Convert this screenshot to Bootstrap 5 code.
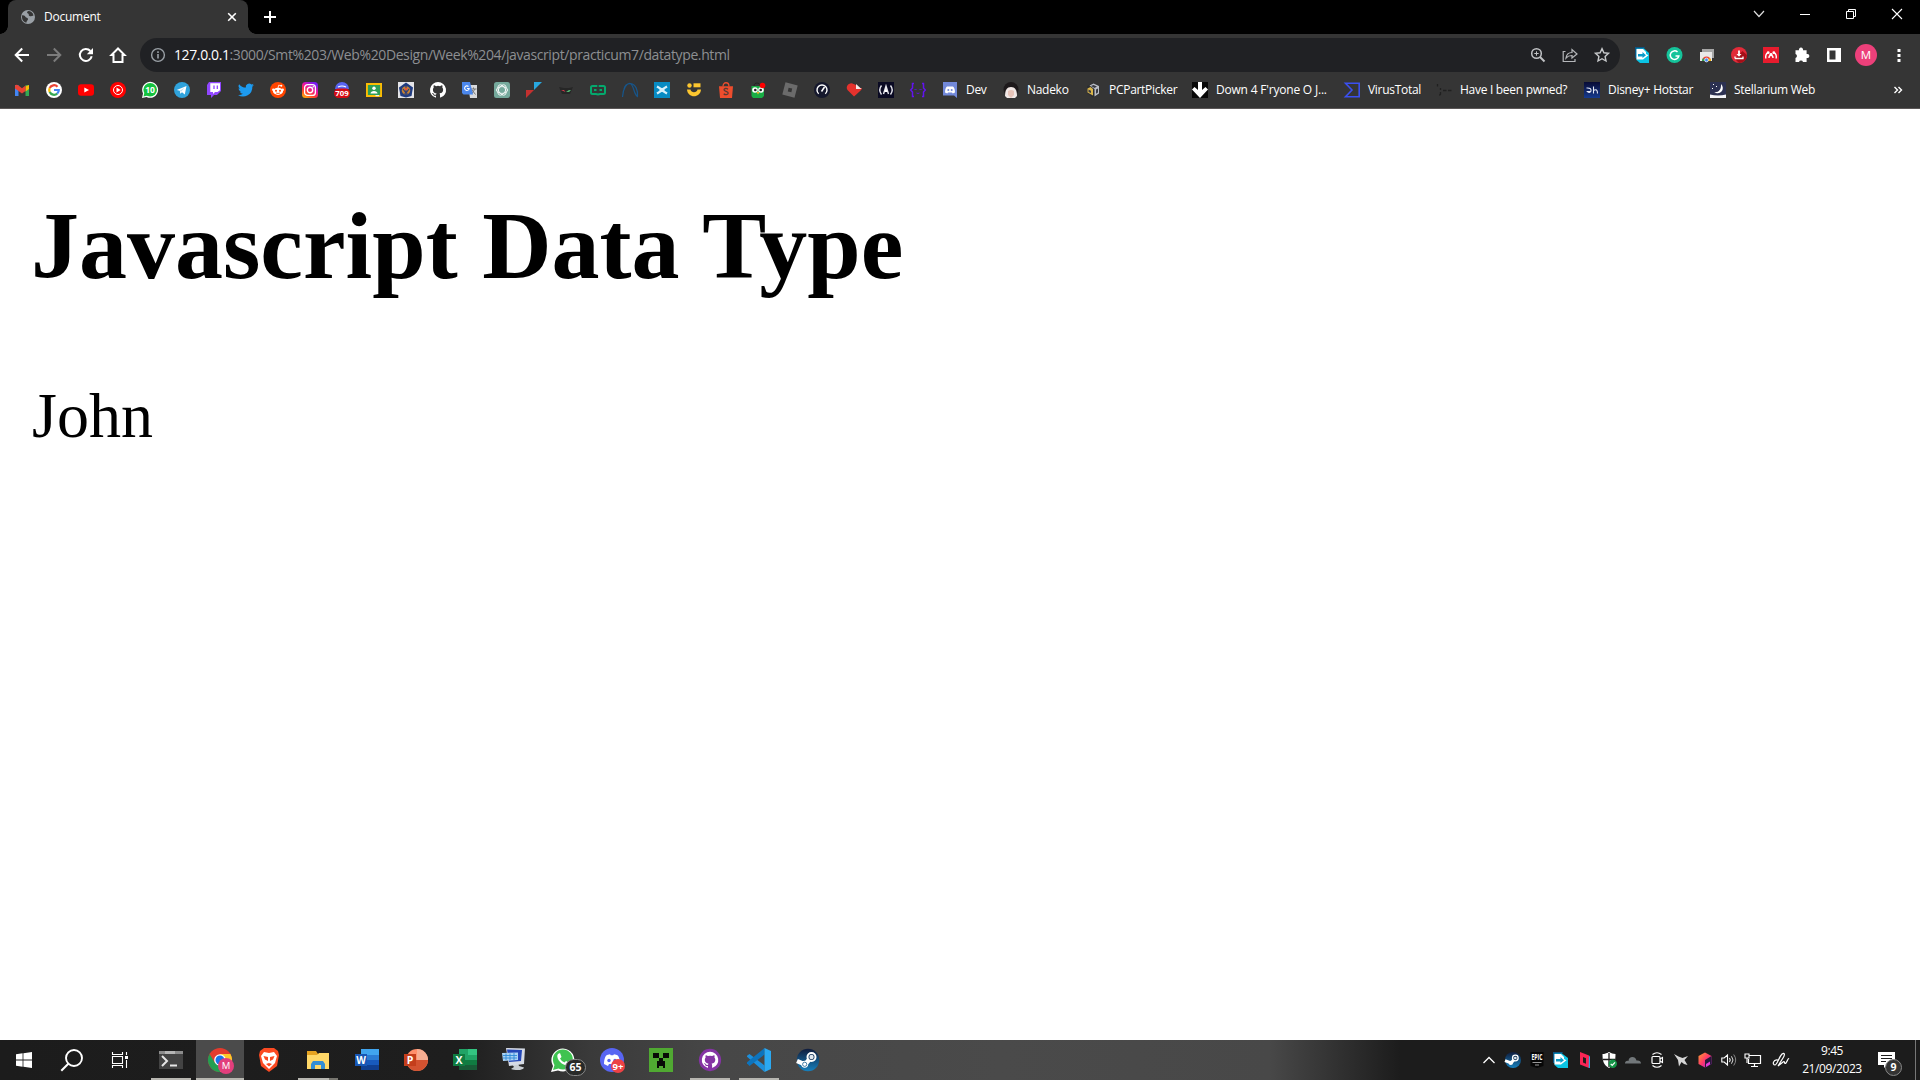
<!DOCTYPE html>
<html lang="en">
<head>
<meta charset="utf-8">
<meta name="viewport" content="width=device-width, initial-scale=1">
<title>Document</title>
<link rel="stylesheet" href="https://cdn.jsdelivr.net/npm/bootstrap@5.3.0/dist/css/bootstrap.min.css">
<style>
  html, body { height: 100%; }
  body { font-family: "Open Sans", "Noto Sans", sans-serif; font-size: 12px; letter-spacing: -.29px; line-height: 16px; color: #fff; background: #fff; }
  svg { display: block; flex: none; overflow: visible; }
  svg text { font-family: "Open Sans", sans-serif; font-weight: 700; text-anchor: middle; letter-spacing: 0; }
  .i16 { width: 16px; height: 16px; }
  .i24 { width: 24px; height: 24px; }
  .tabstrip { height: 34px; background: #000; padding-left: 8px; }
  .tab-active { width: 240px; height: 34px; background: #353535; border-radius: 8px 8px 0 0; padding: 1px 9px 1px 12px; }
  .tab-active::before, .tab-active::after { content: ""; position: absolute; bottom: 0; width: 8px; height: 8px; }
  .tab-active::before { left: -8px; background: radial-gradient(circle at 0 0, transparent 7.5px, #353535 8px); }
  .tab-active::after { right: -8px; background: radial-gradient(circle at 100% 0, transparent 7.5px, #353535 8px); }
  .tab-title { margin-left: 8px; letter-spacing: -.25px; }
  .newtab { margin: 9px 0 0 14px; }
  .winbtn { width: 46px; height: 28px; }
  .toolbar { height: 38px; background: #353535; padding: 4px 13px 0 14px; }
  .navset { gap: 16px; width: 126px; }
  .omnibox { width: 1480px; height: 34px; border-radius: 17px; background: #202124; padding: 0 10px; }
  .url { font-size: 14px; letter-spacing: -.39px; line-height: 20px; margin-left: 8px; color: #8d8f92; white-space: nowrap; }
  .url b { color: #fff; font-weight: 400; }
  .exts { gap: 16px; margin-left: 15px; }
  .exts svg:nth-last-child(-n+4) { margin-left: -1px; margin-right: 1px; }
  .bookmarks { height: 37px; background: #353535; border-bottom: 1px solid #5b5757; padding: 0 17px 0 14px; gap: 16px; }
  .bookmarks span { margin-left: 8px; white-space: nowrap; }
  .w-dev { width: 45px; } .w-nad { width: 66px; } .w-pcp { width: 91px; } .w-down { width: 136px; }
  .w-vt { width: 76px; } .w-pwn { width: 132px; } .w-dis { width: 110px; } .w-ste { width: 105px; }
  .w-down span { letter-spacing: -.2px; }
  .pagebody { font-family: "Liberation Serif", serif; color: #000; font-size: 64px; letter-spacing: 0; line-height: 73px; padding: 0 32px; }
  .pagebody h2 { font-size: 96px; font-weight: 700; line-height: 110px; margin: 82px 0 78px -1px; word-spacing: .6px; }
  .pagebody p { margin: 0; }
  .taskbar { height: 40px; background: linear-gradient(90deg, #1c1c1c 0, #1e1e1e 460px, #3a3a3a 590px, #474747 720px, #4a4a4a 1000px, #484848 1270px, #1c1c1c 1400px); }
  .sysbtn { width: 48px; height: 40px; }
  .appset { margin-left: 3px; }
  .appbtn { width: 49px; height: 40px; padding-right: 1px; }
  .running::after { content: ""; position: absolute; left: 4px; right: 5px; bottom: 0; height: 2px; background: #b7b6b0; }
  .current { background: #4b4b4b; width: 48px; margin-right: 1px; padding-right: 0; }
  .current::after { left: 0; right: 0; }
  .stacked::after { background: linear-gradient(90deg, #b7b6b0 31px, #77766f 31px); }
  .tray { gap: 8px; padding-right: 1px; }
  .clock { width: 84px; line-height: 18px; text-align: center; padding-top: 2px; letter-spacing: -.4px; }
  .notif { width: 41px; padding-left: 4px; }
  .peek { width: 5px; height: 40px; border-left: 1px solid #777; }
</style>
<script src="https://cdn.jsdelivr.net/npm/bootstrap@5.3.0/dist/js/bootstrap.bundle.min.js"></script>
</head>
<body class="d-flex flex-column overflow-hidden">

<header>
  <div class="tabstrip d-flex">
    <div class="tab-active position-relative d-flex align-items-center">
      <svg class="i16" viewBox="0 0 16 16"><circle cx="8" cy="8" r="7" fill="#9aa0a6"/><path d="M2 6.500c2-.5 3 .5 3.500 1.500s2.500.5 2.500 2-1.500 1.500-1.500 3.500C4 13.500 2 11 2 8zM8 2c-1 1-1.500 2 0 2.500s0 2 1.500 2.500 2.500 0 4-.5C13 3.500 11 2 8 2z" fill="#353535"/></svg>
      <span class="tab-title">Document</span>
      <svg class="ms-auto" width="14" height="14" viewBox="0 0 14 14"><path d="M3.200 3.200l7.600 7.600M10.800 3.200l-7.600 7.600" stroke="#fff" stroke-width="1.600"/></svg>
    </div>
    <svg class="i16 newtab" viewBox="0 0 16 16"><path d="M8 2v12M2 8h12" stroke="#fff" stroke-width="2"/></svg>
    <div class="d-flex ms-auto">
      <div class="winbtn d-flex align-items-center justify-content-center"><svg width="12" height="8" viewBox="0 0 12 8"><path d="M1 1l5 5.500L11 1" fill="none" stroke="#ddd" stroke-width="1.200"/></svg></div>
      <div class="winbtn d-flex align-items-center justify-content-center"><svg width="10" height="10" viewBox="0 0 10 10"><path d="M0 5.500h10" stroke="#fff"/></svg></div>
      <div class="winbtn d-flex align-items-center justify-content-center"><svg width="10" height="10" viewBox="0 0 10 10"><path d="M.5 2.500h7v7h-7zM2.500 2.500v-2h7v7h-2" fill="none" stroke="#fff"/></svg></div>
      <div class="winbtn d-flex align-items-center justify-content-center"><svg width="10" height="10" viewBox="0 0 10 10"><path d="M0 0l10 10M10 0L0 10" stroke="#fff" stroke-width="1.100"/></svg></div>
    </div>
  </div>

  <div class="toolbar d-flex">
    <div class="navset d-flex align-items-center">
      <svg class="i16" viewBox="0 0 16 16"><path d="M15 8H2M8.200 1.500L1.700 8l6.500 6.500" fill="none" stroke="#fff" stroke-width="2"/></svg>
      <svg class="i16" viewBox="0 0 16 16"><path d="M1 8h13M7.800 1.500L14.300 8l-6.500 6.500" fill="none" stroke="#7b7b7b" stroke-width="2"/></svg>
      <svg class="i16" viewBox="0 0 16 16"><path d="M13.700 9.200A6 6 0 1 1 12.400 4" fill="none" stroke="#fff" stroke-width="2"/><path d="M15 1v6.200H8.800z" fill="#fff"/></svg>
      <svg class="i16" viewBox="0 0 16 16"><path d="M8 1.500L1.500 8H3.500v7h9V8h2z" fill="none" stroke="#fff" stroke-width="2"/></svg>
    </div>
    <div class="omnibox d-flex align-items-center">
      <svg class="i16" viewBox="0 0 16 16"><circle cx="8" cy="8" r="6.400" fill="none" stroke="#9aa0a6" stroke-width="1.400"/><path d="M8 7v4.500M8 4.300v1.600" stroke="#9aa0a6" stroke-width="1.600"/></svg>
      <span class="url"><b>127.0.0.1</b>:3000/Smt%203/Web%20Design/Week%204/javascript/practicum7/datatype.html</span>
      <div class="d-flex gap-3 ms-auto">
        <svg class="i16" viewBox="0 0 16 16"><circle cx="6.500" cy="6.500" r="4.800" fill="none" stroke="#c0c2c5" stroke-width="1.500"/><path d="M10 10l4.500 4.500" stroke="#c0c2c5" stroke-width="2"/><path d="M6.500 4.300v4.400M4.300 6.500h4.400" stroke="#c0c2c5"/></svg>
        <svg class="i16" viewBox="0 0 16 16"><path d="M3.500 4.500H1.200v10H13V12M4 11c.5-4 3-5.500 6-5.500V2.500L15 7l-5 4V8.500c-3 0-4.500.7-6 2.500z" fill="none" stroke="#b5b7ba" stroke-width="1.200"/></svg>
        <svg class="i16" viewBox="0 0 16 16"><path d="M8 1.600l1.900 4.200 4.600.5-3.400 3.100.9 4.600-4-2.300L4 14l.9-4.600-3.400-3.100 4.600-.5z" fill="none" stroke="#c6c8ca" stroke-width="1.400"/></svg>
      </div>
    </div>
    <div class="exts d-flex align-items-center">
      <svg class="i16" viewBox="0 0 16 16"><path d="M0 0h10l-2 3H3v8H0z" fill="#0b5584"/><path d="M1.500 1.500H9l5 4.500v10H5l-3.500-3z" fill="#0bc4e4"/><path d="M1.500 2H8l3 3v2l2.500 1.300L8 12.500H1.500z" fill="#fff"/><path d="M3 7h4.500V5L11 8.300 7.500 11V9.500H3z" fill="#0a9cc9"/></svg>
      <svg class="i16" viewBox="0 0 16 16"><circle cx="7.500" cy="8" r="8" fill="#15c39a"/><path d="M10.500 5a4.300 4.300 0 1 0 1.300 4H8.500" fill="none" stroke="#fff" stroke-width="1.500"/></svg>
      <svg class="i16" viewBox="0 0 16 16"><path d="M3 2h12v9H3z" fill="#a6a6a6"/><path d="M1 5h12v9H1z" fill="#e9e9e9"/><path d="M3 14a4.500 4.500 0 0 1 9 0" fill="#e84435"/><path d="M3 14a4.500 4.500 0 0 1 1-3l3 3z" fill="#34a853"/><path d="M12 14a4.500 4.500 0 0 0-1-3l-3 3z" fill="#fbbc05"/><circle cx="7.500" cy="13" r="1.900" fill="#4285f4" stroke="#fff" stroke-width=".7"/></svg>
      <svg class="i16" viewBox="0 0 16 16"><circle cx="8" cy="8" r="8" fill="#e22b39"/><path d="M4 12l4 4a8 8 0 0 0 8-8l-4.500-4z" fill="#a50f18"/><path d="M8 3.500v4" stroke="#fff" stroke-width="1.800"/><path d="M4 11.500h8v-2M4 11.500v-2" stroke="#fff" stroke-width="1.300" fill="none"/><path d="M5.500 7h5L8 9.800z" fill="#fff"/></svg>
      <svg class="i16" viewBox="0 0 16 16"><path d="M0 0h16v16H0z" fill="#e81c2e"/><path d="M2.800 11.500c-.4-3 .3-4.800 2-5.500M13.200 11.500c.4-3-.3-4.800-2-5.500M6 11c0-2 .7-2.800 2-2.800s2 .8 2 2.800" fill="none" stroke="#fff" stroke-width="1.400"/><circle cx="5.200" cy="5.700" r="1.400" fill="#fff"/><circle cx="10.800" cy="5.700" r="1.400" fill="#fff"/><circle cx="8" cy="7.300" r="1.400" fill="#fff"/></svg>
      <svg class="i16" viewBox="0 0 16 16"><path d="M1.500 3.300H5a2.100 2.100 0 1 1 4 0h3.600V7a2.100 2.100 0 1 1 0 4v4H9a2.100 2.100 0 0 0-4 0H1.500v-4a2.100 2.100 0 0 0 0-4z" fill="#fff"/></svg>
      <svg class="i16" viewBox="0 0 16 16"><path d="M1 1h14v14H1zM3.500 3.500v9h6v-9z" fill="#fff" fill-rule="evenodd"/></svg>
      <svg class="i16" viewBox="0 0 16 16"><circle cx="8" cy="8" r="11" fill="#ec407a"/><text x="8" y="12.200" font-size="11.500" fill="#fff" style="font-weight:400">M</text></svg>
      <svg class="i16" viewBox="0 0 16 16"><path d="M7.500 2h3v3h-3zM7.500 7h3v3h-3zM7.500 12h3v3h-3z" fill="#fff"/></svg>
    </div>
  </div>

  <nav class="bookmarks d-flex align-items-center">
    <svg class="i16" viewBox="0 0 16 16"><path d="M1 3h3.500v11H1z" fill="#4285f4"/><path d="M11.500 3H15v11h-3.500z" fill="#34a853"/><path d="M11.500 4.500L15 3v4l-3.500 2.500z" fill="#fbbc04"/><path d="M1 3.500C2 2.200 3.500 2.500 4.500 3.500L8 6.200l3.500-2.700v5.500L8 11.500 1 6.500z" fill="#ea4335"/></svg>
    <svg class="i16" viewBox="0 0 16 16"><circle cx="8" cy="8" r="8" fill="#fff"/><g fill="none" stroke-width="2.200"><path d="M11.500 4.700A4.800 4.800 0 0 0 3.700 6" stroke="#ea4335"/><path d="M3.700 6a4.800 4.800 0 0 0 0 4" stroke="#fbbc05"/><path d="M3.700 10a4.800 4.800 0 0 0 7.500 1.600" stroke="#34a853"/><path d="M11.200 11.600A4.800 4.800 0 0 0 12.800 8H8" stroke="#4285f4"/></g></svg>
    <svg class="i16" viewBox="0 0 16 16"><rect y="2.300" width="16" height="11.400" rx="3" fill="#f00"/><path d="M6.300 5.500L11 8l-4.700 2.500z" fill="#fff"/></svg>
    <svg class="i16" viewBox="0 0 16 16"><circle cx="8" cy="8" r="8" fill="#f00"/><circle cx="8" cy="8" r="4.500" fill="none" stroke="#fff" stroke-width="1"/><path d="M6.500 5.500L10.700 8l-4.200 2.500z" fill="#fff"/></svg>
    <svg class="i16" viewBox="0 0 16 16"><path d="M0 16l1-4.500A8 8 0 1 1 4.500 15z" fill="#fff"/><circle cx="8.200" cy="7.800" r="6.800" fill="#15c23f"/><path d="M1.500 14.500l1-4 3 3z" fill="#15c23f"/><text x="8" y="11" font-size="8.500" fill="#fff">10</text></svg>
    <svg class="i16" viewBox="0 0 16 16"><circle cx="8" cy="8" r="8" fill="#30a3dc"/><path d="M2.700 8L12.500 4l-1.700 8.500L8 10.300l-1.700 1.500-.5-3z" fill="#fff"/><path d="M5.800 8.800l4.700-3-3.500 4" fill="#b9dcee"/></svg>
    <svg class="i16" viewBox="0 0 16 16"><path d="M3 0h12v9l-4 4H8l-3 3v-3H1V3z" fill="#9146ff"/><path d="M4.300 1.200H14v7L11.500 10H9l-2 2v-2H4.300z" fill="#fff"/><path d="M8 3.500V7M11.300 3.500V7" stroke="#9146ff" stroke-width="1.300"/></svg>
    <svg class="i16" viewBox="0 0 24 24"><path d="M23.900 4.600a10 10 0 0 1-2.800.8 5 5 0 0 0 2.200-2.700 10 10 0 0 1-3.100 1.200 4.900 4.900 0 0 0-8.400 4.500A14 14 0 0 1 1.700 3.200a4.900 4.900 0 0 0 1.500 6.600 5 5 0 0 1-2.200-.6 4.900 4.900 0 0 0 3.900 4.900 5 5 0 0 1-2.200.1 4.900 4.900 0 0 0 4.600 3.400A10 10 0 0 1 0 19.500 14 14 0 0 0 21.500 7a10 10 0 0 0 2.400-2.400z" fill="#1d9bf0"/></svg>
    <svg class="i16" viewBox="0 0 16 16"><circle cx="8" cy="8" r="8" fill="#ff4500"/><ellipse cx="8" cy="9.300" rx="5" ry="3.600" fill="#fff"/><circle cx="3.300" cy="7.700" r="1.200" fill="#fff"/><circle cx="12.700" cy="7.700" r="1.200" fill="#fff"/><path d="M8 6l.7-2.800 2.500.5" fill="none" stroke="#fff" stroke-width=".8"/><circle cx="11.300" cy="3.800" r="1" fill="#fff"/><circle cx="6" cy="8.700" r="1" fill="#ff4500"/><circle cx="10" cy="8.700" r="1" fill="#ff4500"/><path d="M6 11q2 1 4 0" stroke="#ff4500" stroke-width=".8" fill="none"/></svg>
    <svg class="i16" viewBox="0 0 16 16"><defs><linearGradient id="ig" x1="0" y1="1" x2=".6" y2="0"><stop offset="0" stop-color="#ffc400"/><stop offset=".4" stop-color="#ff3b30"/><stop offset=".7" stop-color="#e912a4"/><stop offset="1" stop-color="#7a1df0"/></linearGradient></defs><rect width="16" height="16" rx="3.500" fill="url(#ig)"/><rect x="2.600" y="2.600" width="10.800" height="10.800" rx="3" fill="none" stroke="#fff" stroke-width="1.300"/><circle cx="8" cy="8" r="2.700" fill="none" stroke="#fff" stroke-width="1.400"/><circle cx="11.300" cy="4.700" r=".8" fill="#fff"/></svg>
    <svg class="i16" viewBox="0 0 16 16"><path d="M1 7a7 7 0 0 1 14 0z" fill="#5865f2"/><path d="M4 5q4-2 8 0" fill="none" stroke="#fff" stroke-width="1.200"/><rect y="6.500" width="16" height="9.500" rx="4.500" fill="#d40b13"/><text x="8" y="14.200" font-size="7.800" fill="#fff">709</text></svg>
    <svg class="i16" viewBox="0 0 16 16"><path d="M0 1h16v14H0z" fill="#fbbc04"/><path d="M1.900 3h12.200v10H1.900z" fill="#2e9e57"/><circle cx="8" cy="6.300" r="1.700" fill="#fff"/><path d="M4.500 11.500c0-3.500 7-3.500 7 0z" fill="#fff"/><path d="M9.500 13h3.500v1.200H9.500z" fill="#eee"/></svg>
    <svg class="i16" viewBox="0 0 16 16"><path d="M0 0h16v16H0z" fill="#e4e4e8"/><path d="M8 .5l7 5L13.500 14 8 15.500 2.500 14 1 5.500z" fill="#203c80"/><circle cx="8" cy="8.500" r="4.200" fill="#c88231"/><path d="M8 3v10M5 7l3 4 3-4M5.500 12h5" fill="none" stroke="#283d7b" stroke-width="1.100"/><circle cx="8" cy="7" r="1.300" fill="#e74d3b"/></svg>
    <svg class="i16" viewBox="0 0 16 16"><path d="M8 0a8 8 0 0 0-2.530 15.590c.4.070.550-.170.550-.380v-1.490c-2.010.370-2.530-.490-2.690-.940-.090-.230-.480-.940-.820-1.130-.280-.150-.680-.520-.010-.530.630-.010 1.080.580 1.230.820.720 1.210 1.870.870 2.330.660.070-.520.280-.870.510-1.070-1.780-.200-3.640-.890-3.640-3.950 0-.870.310-1.590.820-2.150-.080-.200-.360-1.020.080-2.120 0 0 .670-.210 2.200.820a7.500 7.500 0 0 1 4 0c1.530-1.040 2.200-.820 2.200-.820.440 1.100.160 1.920.080 2.120.510.560.820 1.270.820 2.150 0 3.070-1.870 3.750-3.650 3.950.290.250.540.730.540 1.480v2.200c0 .210.150.460.550.380A8 8 0 0 0 8 0z" fill="#fff"/></svg>
    <svg class="i16" viewBox="0 0 16 16"><path d="M6 3h9v13H8z" fill="#d9dadc"/><path d="M8.500 7h6M11.500 5.500V7M9.500 12l3.500-5M10 8l3.500 4.500" stroke="#777" fill="none"/><path d="M0 0h8l3 12.500H1.500L0 11z" fill="#4b87ec"/><path d="M6.500 4.500a2.300 2.300 0 1 0 .7 2H5" fill="none" stroke="#fff" stroke-width="1.100"/></svg>
    <svg class="i16" viewBox="0 0 16 16"><rect width="16" height="16" rx="2.500" fill="#75a99c"/><g fill="none" stroke="#fff" stroke-width=".8"><ellipse cx="8" cy="8" rx="5.700" ry="3.400"/><ellipse cx="8" cy="8" rx="5.700" ry="3.400" transform="rotate(60 8 8)"/><ellipse cx="8" cy="8" rx="5.700" ry="3.400" transform="rotate(120 8 8)"/></g></svg>
    <svg class="i16" viewBox="0 0 16 16"><path d="M8 0h8L8 8z" fill="#28a8e0"/><path d="M0 8h8l-8 8z" fill="#c4302f"/></svg>
    <svg class="i16" viewBox="0 0 16 16"><path d="M1 5l5 1h5l4-1-3 7H4z" fill="#262626"/><path d="M3 8h3l1.500 2z" fill="#d33a4a"/><path d="M8 10l3-2 2 .3-2 1.700z" fill="#53b973"/></svg>
    <svg class="i16" viewBox="0 0 16 16"><path d="M7.300 4H2.500Q1 4 1 5.500v5Q1 12 2.500 12H6l2 .5 2-.5h3.500q1.500 0 1.500-1.500v-5Q15 4 13.500 4H8.700" fill="none" stroke="#04a96d" stroke-width="2"/><path d="M4 7h2.500v2H4zM9.500 7H12v2H9.500z" fill="#04a96d"/></svg>
    <svg class="i16" viewBox="0 0 16 16"><path d="M.5 15C1 6 5 1 8 1.500c4 .8 3.500 11 7.500 13 .500-6-1.500-12-7-13C5 1.500 2.500 4 2 7" fill="none" stroke="#17558a" stroke-width="1.200"/></svg>
    <svg class="i16" viewBox="0 0 16 16"><path d="M0 0h16v16H0z" fill="#078bc3"/><path d="M3 4.500l4 2.500h2l4-2.500M3 11.500L7 9h2l4 2.500" stroke="#d6f0fa" stroke-width="2.100" fill="none"/><path d="M5.500 8h5" stroke="#d6f0fa" stroke-width="2"/></svg>
    <svg class="i16" viewBox="0 0 16 16"><circle cx="3.500" cy="3.500" r="2.200" fill="#fcc62f"/><path d="M7.500 1.300h7v4h-7z" fill="#fcc62f"/><path d="M1 7.500h3.500c.5 3.500 6.500 3.500 7 0H15c-.5 9-13.500 9-14 0z" fill="#fcc62f"/></svg>
    <svg class="i16" viewBox="0 0 16 16"><path d="M5 4.500C5-.500 11-.500 11 4.500" fill="none" stroke="#ee4d2d" stroke-width="1.300"/><path d="M1 4.300h14L14 16H2z" fill="#ee4d2d"/><path d="M10 7.200c-1.500-1.200-4-.9-4 .6 0 2 4.200 1.200 4.200 3.300 0 1.900-3 2.100-4.500.6" fill="none" stroke="#573a34" stroke-width="1.300"/></svg>
    <svg class="i16" viewBox="0 0 16 16"><path d="M4 4C4 0 10 0 10 4" stroke="#222" fill="none"/><path d="M1.500 4L14 4v10l-2 2H3l-1.500-2z" fill="#19ae45"/><circle cx="5" cy="8" r="2.800" fill="#fff"/><circle cx="11" cy="8" r="2.800" fill="#fff"/><circle cx="5.300" cy="8" r="1.300" fill="#222"/><circle cx="10.700" cy="8" r="1.300" fill="#222"/><path d="M6.500 10h3L8 12.500z" fill="#f4b32b"/><circle cx="12.500" cy="3.500" r="2.800" fill="#f00"/></svg>
    <svg class="i16" viewBox="0 0 16 16"><path d="M3.500.3L15.700 3.500 12.500 15.700.3 12.500zM6.600 5.800l-.8 3.600 3.600.8.800-3.600z" fill="#6b6b6b" fill-rule="evenodd"/></svg>
    <svg class="i16" viewBox="0 0 16 16"><circle cx="8" cy="8" r="8" fill="#15182d"/><path d="M4.700 11.700a5 5 0 1 1 6.600 0" fill="none" stroke="#fff" stroke-width="1.400"/><path d="M7.500 9.500L10.500 5" stroke="#fff" stroke-width="1.500"/></svg>
    <svg class="i16" viewBox="0 0 16 16"><path d="M8 14.500L1.500 8C-1 4.500 3.500-.5 7.500 2l1.500.5 4 4 3-.5c0 1.500-1 2.500-8 8.500z" fill="#e5322d"/><path d="M10 2l5.500 5H10z" fill="#f8e9e8"/></svg>
    <svg class="i16" viewBox="0 0 16 16"><path d="M0 0h16v16H0z" fill="#0a0a23"/><path d="M3.500 3.500Q0 8 3.500 12.500M12.500 3.500Q16 8 12.500 12.500M5.500 12L8 4l2.500 8" fill="none" stroke="#e7e7ee" stroke-width="1.400"/><path d="M7 8l1-3 1.500 5h-3z" fill="#fff"/></svg>
    <svg class="i16" viewBox="0 0 16 16"><path d="M4 1.500H2.500V6L.700 8l1.800 2v4.500H4M12 1.500h1.500V6l1.800 2-1.800 2v4.500H12" fill="none" stroke="#6213ee" stroke-width="1.500"/><path d="M4.500 8l1-1 1 1M9.500 8l1-1 1 1M6.500 11q1.500 1 3 0" fill="none" stroke="#5b12dc"/></svg>
    <div class="w-dev d-flex"><svg class="i16" viewBox="0 0 16 16"><path d="M1 0h14v16l-3-2.500H1z" fill="#7289da"/><path d="M3 10.500c0-3 1-5.500 2-6l6 0c1 .5 2 3 2 6l-2.300 1-.700-1H6l-.700 1z" fill="#fff"/><circle cx="6.300" cy="8" r="1" fill="#7289da"/><circle cx="9.700" cy="8" r="1" fill="#7289da"/></svg><span>Dev</span></div>
    <div class="w-nad d-flex"><svg class="i16" viewBox="0 0 16 16"><circle cx="8" cy="7.500" r="7.500" fill="#1d191b"/><path d="M2 14c0-6 2-9 6-9s6 3 6 9l-2 2H4z" fill="#f1e8e6"/><path d="M5 9q3-2 6 0v4l-3 3-3-3z" fill="#e7c4b9"/></svg><span>Nadeko</span></div>
    <div class="w-pcp d-flex"><svg class="i16" viewBox="0 0 16 16"><path d="M2 4l6-2.500L14 4v8l-6 3.500L2 11z" fill="#2b2d31"/><path d="M2.500 6.500l3-1.500 2.500 2v6.500l-5.500-3z" fill="#d9b54a"/><path d="M4.500 3.500l4-2L14 4v7.500l-4.500 3V7z" fill="#b9bdc6"/><path d="M3.500 7.500l2.500 1.200V11l-2.500-1zM11 7.500l2-1v4l-2 1.200zM6 4l2.500-1L12 4.500 9.500 6z" fill="#3a3b43"/></svg><span>PCPartPicker</span></div>
    <div class="w-down d-flex"><svg class="i16" viewBox="0 0 16 16"><path d="M0 0h16v16H0z" fill="#080808"/><path d="M6 0h4v8l3.500-3L16 7.500 8 16 0 7.500 2.500 5 6 8z" fill="#fff"/></svg><span>Down 4 F'ryone O J...</span></div>
    <div class="w-vt d-flex"><svg class="i16" viewBox="0 0 16 16"><path d="M1.500 1.200h13.700v13.600H1.500L8 8z" fill="none" stroke="#3b50f0" stroke-width="1.600"/></svg><span>VirusTotal</span></div>
    <div class="w-pwn d-flex"><svg class="i16" viewBox="0 0 16 16"><path d="M1.500 2v2.500M4.500 6v2M4.500 10v2l-1 1.500M7 8.500h3.500M12 8.500h3.500" stroke="#202020" stroke-width="1.300"/></svg><span>Have I been pwned?</span></div>
    <div class="w-dis d-flex"><svg class="i16" viewBox="0 0 16 16"><defs><linearGradient id="dh" x2="0" y2="1"><stop stop-color="#080b35"/><stop offset="1" stop-color="#173b8e"/></linearGradient></defs><path d="M0 0h16v16H0z" fill="url(#dh)"/><path d="M2.500 6q5-.5 4.500 3Q5.500 11.500 3.500 9.500H6M9.500 4.500v7M9.500 8.500q4-2.500 4 3" fill="none" stroke="#e4e9f7" stroke-width="1.100"/></svg><span>Disney+ Hotstar</span></div>
    <div class="w-ste d-flex"><svg class="i16" viewBox="0 0 16 16"><path d="M0 0h16v16H0z" fill="#2c3152"/><path d="M11 2a5.300 5.300 0 1 1-7 8c4 1 7.500-2 7-8z" fill="#fff"/><path d="M0 12.500q8 2 16 0V16H0z" fill="#f5f5f8"/><path d="M3 2h1v1H3zM6 4h1v1H6zM2 6h1v1H2z" fill="#fff"/></svg><span>Stellarium Web</span></div>
    <svg class="ms-auto" width="10" height="10" viewBox="0 0 10 10"><path d="M1.500 2l3 3-3 3M5.500 2l3 3-3 3" fill="none" stroke="#fff" stroke-width="1.400"/></svg>
  </nav>
</header>

<main class="pagebody flex-grow-1">
  <h2>Javascript Data Type</h2>
  <p>John</p>
</main>

<footer class="taskbar d-flex">
  <div class="sysbtn d-flex align-items-center justify-content-center"><svg class="i16" viewBox="0 0 16 16"><path d="M0 2.200L6.600 1.300v6.300H0zM7.400 1.200L16 0v7.600H7.400zM0 8.400h6.600v6.300L0 13.800zM7.400 8.400H16V16l-8.600-1.200z" fill="#fff"/></svg></div>
  <div class="sysbtn d-flex align-items-center justify-content-center"><svg class="i24" viewBox="0 0 24 24"><circle cx="14" cy="10" r="8" fill="none" stroke="#fff" stroke-width="1.900"/><path d="M8.300 15.700L1.300 22.700" stroke="#fff" stroke-width="2"/></svg></div>
  <div class="sysbtn d-flex align-items-center justify-content-center"><svg class="i16" viewBox="0 0 16 16"><path d="M.5 0v2.500h10V0M.5 16v-2.500h10V16M.5 4.500h10v7H.500zM14.500 0v3M14.500 8v8" fill="none" stroke="#fff" stroke-width="1.100"/><path d="M13 4h3v3h-3z" fill="#fff"/></svg></div>
  <div class="appset d-flex">
    <div class="appbtn running position-relative d-flex align-items-center justify-content-center"><svg class="i24" viewBox="0 0 24 24"><path d="M0 3h24v18H0z" fill="#434343"/><path d="M0 3h24v3H0z" fill="#8c8c8c"/><path d="M6 3h10v3H6z" fill="#b5b5b5"/><path d="M3 8l5 5-5 5M11 17.500h7" fill="none" stroke="#e6e6e6" stroke-width="2"/></svg></div>
    <div class="appbtn running current position-relative d-flex align-items-center justify-content-center"><svg class="i24" viewBox="0 0 24 24"><circle cx="12" cy="12" r="12" fill="#e33b2e"/><path d="M1.600 6A12 12 0 0 0 12 24l5-9H7z" fill="#239e51"/><path d="M22.400 6A12 12 0 0 1 12 24l5.500-10L12 6z" fill="#fcc928"/><circle cx="12" cy="12" r="5.800" fill="#fff"/><circle cx="12" cy="12" r="4.500" fill="#1a73e8"/><circle cx="18" cy="18" r="8" fill="#e23e7c"/><text x="18" y="21.300" font-size="9.500" fill="#fff" style="font-weight:400">M</text></svg></div>
    <div class="appbtn d-flex align-items-center justify-content-center"><svg class="i24" viewBox="0 0 24 24"><path d="M7 0h10l4 3 1 4-2 11-8 6-8-6L2 7l1-4z" fill="#fb4a22"/><path d="M7 4l5 1 5-1 3 4-2 7-6 6-6-6-2-7z" fill="#fff"/><path d="M6.500 8l4.500 1v4l-3-1.500zM17.500 8L13 9v4l3-1.500zM9 16l3-1 3 1-3 2.500z" fill="#fb4a22"/></svg></div>
    <div class="appbtn running stacked position-relative d-flex align-items-center justify-content-center"><svg class="i24" viewBox="0 0 24 24"><path d="M1 3h9l2 3h11v15H1z" fill="#e6a321"/><path d="M1 7h10l2-2h10v16H1z" fill="#ffd868"/><path d="M5 21v-5l2-3h10l2 3v5h-4v-4H9v4z" fill="#338ed5"/></svg></div>
    <div class="appbtn d-flex align-items-center justify-content-center"><svg class="i24" viewBox="0 0 24 24"><path d="M6 1h18v6H6z" fill="#41a5ee"/><path d="M6 7h18v5H6z" fill="#2b7cd3"/><path d="M6 12h18v5H6z" fill="#185abd"/><path d="M6 17h18v5H6z" fill="#103f91"/><path d="M0 6h12v12H0z" fill="#1857b5"/><text x="6" y="15.800" font-size="10" fill="#fff">W</text></svg></div>
    <div class="appbtn d-flex align-items-center justify-content-center"><svg class="i24" viewBox="0 0 24 24"><circle cx="13" cy="12" r="11" fill="#ff8f6b"/><path d="M2 12h22a11 11 0 0 1-22 0z" fill="#d35230"/><path d="M13 1v11h11A11 11 0 0 0 13 1z" fill="#f7ad91"/><path d="M0 6h12v12H0z" fill="#c43e1c"/><text x="6" y="15.800" font-size="10.500" fill="#fff">P</text></svg></div>
    <div class="appbtn d-flex align-items-center justify-content-center"><svg class="i24" viewBox="0 0 24 24"><path d="M6 1h18v21H6z" fill="#21a366"/><path d="M15 1h9v6h-9z" fill="#33c481"/><path d="M6 12h9v10H6zM15 12h9v5h-9z" fill="#107c41"/><path d="M6 17h18v5H6z" fill="#185c37"/><path d="M0 6h12v12H0z" fill="#107c41"/><text x="6" y="15.800" font-size="10.500" fill="#fff">X</text></svg></div>
    <div class="appbtn d-flex align-items-center justify-content-center"><svg class="i24" viewBox="0 0 24 24"><path d="M10 16l6-1 1 3 5 1.500c0 2.500-8 3.500-13 1.500l3-2z" fill="#c9ced3"/><path d="M4 0l19 .5L22 16 7 18z" fill="#d6dbe5"/><path d="M5 1.500l15 .5-1 11-12 1z" fill="#2347b8"/><path d="M0 5l16-.5V12L1 13z" fill="#a9d2f5"/><path d="M1 7.500h14M1 10h14M4 5.500V12M8 5.500V12M12 5v7" stroke="#2e8bd8" stroke-width=".9"/></svg></div>
    <div class="appbtn d-flex align-items-center justify-content-center"><svg class="i24" viewBox="0 0 24 24"><path d="M0 24l2-6A11.500 11.500 0 1 1 7 22.500z" fill="#fff"/><path d="M2 22l1.500-5A10 10 0 1 1 7.500 20.500z" fill="#3fc351"/><path d="M7 6l2-1 1.500 4L9 10.500q1.500 3 4.500 4l1.500-1.500 4 2c0 2-3 3-5 2C9 16 4.500 9 7 6z" fill="#fff"/><rect x="14.500" y="11.500" width="20" height="16" rx="8" fill="#282a29" stroke="#888" stroke-width="1"/><text x="24.500" y="23.200" font-size="10.500" fill="#fff">65</text></svg></div>
    <div class="appbtn d-flex align-items-center justify-content-center"><svg class="i24" viewBox="0 0 24 24"><circle cx="12" cy="12" r="12" fill="#5865f2"/><path d="M4 16c0-4 1-8 3-9l3-.8.800 1h2.400l.800-1 3 .8c2 1 3 5 3 9l-4 2-1-2H9l-1 2z" fill="#fff"/><circle cx="9" cy="12.500" r="1.700" fill="#5865f2"/><circle cx="15" cy="12.500" r="1.700" fill="#5865f2"/><circle cx="18" cy="18" r="7" fill="#ed4245"/><text x="18" y="21.500" font-size="9.500" fill="#fff">9+</text></svg></div>
    <div class="appbtn d-flex align-items-center justify-content-center"><svg class="i24" viewBox="0 0 24 24"><path d="M0 0h24v24H0z" fill="#50a932"/><path d="M4 5h6v5H4zM14 5h6v5h-6zM10 10h4v3h2v7h-2v-2h-4v2H8v-7h2z" fill="#080b06"/></svg></div>
    <div class="appbtn running position-relative d-flex align-items-center justify-content-center"><svg class="i24" viewBox="-3 -3 22 22"><circle cx="8" cy="8" r="10.200" fill="#8534a4"/><path transform="translate(.5 .5) scale(.94)" d="M8 0a8 8 0 0 0-2.530 15.590c.4.070.550-.170.550-.380v-1.490c-2.010.370-2.530-.490-2.690-.940-.090-.230-.480-.940-.820-1.130-.280-.150-.680-.520-.010-.530.630-.010 1.080.580 1.230.820.720 1.210 1.870.870 2.330.660.070-.520.280-.870.510-1.070-1.780-.200-3.640-.890-3.640-3.950 0-.870.310-1.590.820-2.150-.080-.200-.360-1.020.080-2.120 0 0 .670-.210 2.200.820a7.500 7.500 0 0 1 4 0c1.530-1.040 2.200-.820 2.200-.820.440 1.100.160 1.920.080 2.120.510.560.820 1.270.820 2.150 0 3.070-1.870 3.750-3.650 3.950.290.250.540.730.540 1.480v2.200c0 .210.150.460.550.380A8 8 0 0 0 8 0z" fill="#fff"/></svg></div>
    <div class="appbtn running position-relative d-flex align-items-center justify-content-center"><svg class="i24" viewBox="0 0 24 24"><path d="M2.500 6L0 7.700v1L17.500 24V17.500z" fill="#1c8fdc"/><path d="M0 15.300L2.500 18 17.500 6.500V0L0 14.300z" fill="#0d74bd"/><path d="M17.500 0L24 3v18l-6.500 3z" fill="#2ba9f2"/></svg></div>
    <div class="appbtn d-flex align-items-center justify-content-center"><svg class="i24" viewBox="0 0 24 24"><defs><linearGradient id="st" x2="0" y2="1"><stop stop-color="#101c3c"/><stop offset="1" stop-color="#1680bd"/></linearGradient></defs><circle cx="12" cy="12" r="11.200" fill="url(#st)"/><path d="M1 13l7 3M9.500 16l5-6" fill="none" stroke="#fff" stroke-width="4.500"/><circle cx="15.500" cy="9" r="4" fill="#17365a" stroke="#fff" stroke-width="2"/><circle cx="15.500" cy="9" r="2.200" fill="#dfe7ee"/><circle cx="8.700" cy="16.300" r="2.800" fill="#fff" stroke="#fff" stroke-width="1.300"/><circle cx="8.700" cy="16.300" r="2.100" fill="none" stroke="#1b5f92" stroke-width=".8"/></svg></div>
  </div>
  <div class="tray d-flex align-items-center ms-auto">
    <svg class="i16" viewBox="0 0 16 16"><path d="M2.500 11L8 5.500l5.500 5.500" fill="none" stroke="#fff" stroke-width="1.300"/></svg>
    <svg class="i16" viewBox="0 0 24 24"><circle cx="12" cy="12" r="12" fill="url(#st)"/><path d="M0 13l8 3M9.500 16l5-6" fill="none" stroke="#fff" stroke-width="4.500"/><circle cx="15.500" cy="9" r="4.200" fill="#17365a" stroke="#fff" stroke-width="2"/><circle cx="15.500" cy="9" r="2" fill="#dfe7ee"/><circle cx="8.700" cy="16.300" r="3.300" fill="#fff"/></svg>
    <svg class="i16" viewBox="0 0 16 16"><path d="M1.500 0h13v14L8 16l-6.500-2z" fill="#070707"/><text x="13.300" y="8.200" font-size="8.500" fill="#fff" transform="scale(.6 1)">EPIC</text><path d="M3.500 10.500h9M6 13h4" stroke="#aaa" stroke-width=".9"/></svg>
    <svg class="i16" viewBox="0 0 16 16"><path d="M0 0h10l-2 3H3v8H0z" fill="#0b5584"/><path d="M1.500 1.500H9l6 4.500v10H5l-3.500-3z" fill="#0bc4e4"/><path d="M1.500 2H8l3 3v2l2.500 1.300L8 12.500H1.500z" fill="#fff"/><path d="M3 7h4.500V5L11 8.300 7.500 11V9.500H3z" fill="#0a9cc9"/></svg>
    <svg class="i16" viewBox="0 0 16 16"><path d="M3 0l9 3.500V16l-9-3.500zM6 5v5.500l3 1.200V6.200z" fill="#f92555" fill-rule="evenodd"/><path d="M12 3.500l1 1V16h-1.300z" fill="#27a9de"/></svg>
    <svg class="i16" viewBox="0 0 16 16"><path d="M8 0q3 2 6.500 2c0 7-1 11-6.500 14C2.500 13 1.500 9 1.500 2 5 2 8 0 8 0z" fill="#fff"/><path d="M8 1v14M2 7.500h12" stroke="#1d1d1d" stroke-width="1.300"/><circle cx="11.800" cy="11.800" r="4.200" fill="#159447"/><path d="M9.700 11.800l1.500 1.500 2.800-3" fill="none" stroke="#fff" stroke-width="1.200"/></svg>
    <svg class="i16" viewBox="0 0 16 16"><path d="M0 11.500c0-2 1.500-3 3.500-2.500 0-5 7-5.500 8-.5 2.500-.5 4.500.5 4.500 3z" fill="#72777a"/></svg>
    <svg class="i16" viewBox="0 0 16 16"><rect x="3" y="4.500" width="8" height="7" rx="1" fill="none" stroke="#fff" stroke-width="1.200"/><path d="M11 7l2.500-1.500v5L11 9M3.500 2.500Q8-1 12.500 2.500M3.500 13.500Q8 17 12.500 13.500" fill="none" stroke="#fff" stroke-width="1.100"/></svg>
    <svg class="i16" viewBox="0 0 16 16"><path d="M1 2l4.500 2.500 4 1.500L15 4l-3.500 4 3 5-3.500-1-2.500-2L6 14.500 5 8z" fill="#d7d7d7"/></svg>
    <svg class="i16" viewBox="0 0 16 16"><defs><linearGradient id="cube" x2="1" y2="1"><stop stop-color="#ff9f2e"/><stop offset=".5" stop-color="#ff356b"/><stop offset="1" stop-color="#9d2cef"/></linearGradient></defs><path d="M8 .5l6.500 3.500v8L8 15.500 1.500 12V4z" fill="url(#cube)"/><path d="M8 8l6.500-4v8L8 15.500z" fill="#27183b"/><path d="M9 12l4-2.500v3L9 15z" fill="#e33bd8"/></svg>
    <svg class="i16" viewBox="0 0 16 16"><path d="M.8 6h2.400L6.500 3v10L3.200 10H.800zM8.500 6q1.500 2 0 4" fill="none" stroke="#fff" stroke-width="1.100"/><path d="M10.500 4.300q3 3.700 0 7.400" fill="none" stroke="#ddd"/><path d="M12.700 2.500q4 5.500 0 11" fill="none" stroke="#888"/></svg>
    <svg class="i16" viewBox="0 0 16 16"><path d="M4 3.500h11.500v8H3.500V7M9.500 11.500v3M6 14.500h7" fill="none" stroke="#fff" stroke-width="1.200"/><path d="M0 2h4v4H0zM2 6v5" fill="none" stroke="#fff" stroke-width="1.100"/></svg>
    <svg class="i16 ms-1" viewBox="0 0 16 16"><path d="M5 8C0 7-1 13 2 13c2 0 4-8 7-11 3-2 3 1 1 4l-5 8 5-4c2-2 1 3 3 1 2-3 2-5 3-4" fill="none" stroke="#fff" stroke-width="1.200"/></svg>
  </div>
  <div class="clock"><div>9:45</div><div>21/09/2023</div></div>
  <div class="notif d-flex align-items-center"><svg class="i24" viewBox="0 0 24 24"><path d="M0 4h17v13H9l-3 3v-3H0z" fill="#fff"/><path d="M3 7.500h11M3 10.500h11M3 13.500h5" stroke="#1d1d1d"/><circle cx="15.500" cy="19.500" r="8" fill="#333" stroke="#888"/><text x="15.500" y="23.300" font-size="10.500" fill="#fff">9</text></svg></div>
  <div class="peek"></div>
</footer>
</body>
</html>
